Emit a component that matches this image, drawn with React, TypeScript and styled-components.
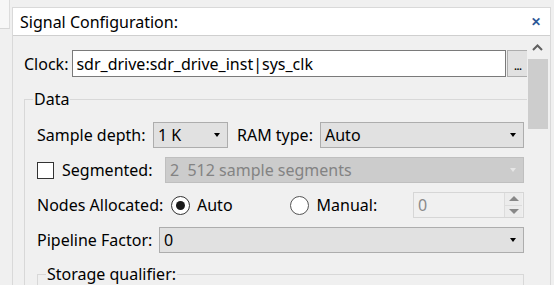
import React from "react";
import styled, { createGlobalStyle } from "styled-components";

const Global = createGlobalStyle`
  html, body { margin: 0; padding: 0; background: #f0f0f0; }
  body { font-family: "Noto Sans", "Open Sans", sans-serif; font-size: 16px; color: #000; }
  * { box-sizing: border-box; }
`;

const Page = styled.div`
  width: 554px;
  height: 285px;
  display: flex;
  overflow: hidden;
  background: #f0f0f0;
`;

const LeftStub = styled.div`
  width: 12px;
  flex: none;
  display: flex;
  flex-direction: column;
`;

const StubTop = styled.div`
  height: 29px;
  width: 10px;
  border-right: 1px solid #dcdcdc;
  border-bottom: 1px solid #d6d6d6;
  background: #f7f7f7;
`;

const Panel = styled.div`
  flex: 1;
  margin: 7px 3px 0 0;
  border: 1px solid #d9d9d9;
  border-bottom: none;
  display: flex;
  flex-direction: column;
  min-width: 0;
`;

const TitleBar = styled.div`
  height: 28px;
  flex: none;
  background: #fff;
  border-bottom: 1px solid #cfcfcf;
  display: flex;
  align-items: center;
  justify-content: space-between;
  padding: 0 9px 0 7px;
`;

const Title = styled.span`
  line-height: 20px;
`;

const Close = styled.span`
  font-size: 12px;
  font-weight: bold;
  color: #2b5797;
  line-height: 12px;
`;

const Body = styled.div`
  flex: 1;
  display: flex;
  min-height: 0;
`;

const Content = styled.div`
  flex: 1;
  min-width: 0;
  overflow: hidden;
  padding: 14px 0 0 11px;
`;

const Row = styled.div<{ $mt?: number }>`
  display: flex;
  align-items: center;
  margin-top: ${(p) => p.$mt ?? 0}px;
`;

const Label = styled.span<{ $w?: number; $ml?: number }>`
  flex: none;
  width: ${(p) => (p.$w ? `${p.$w}px` : "auto")};
  margin-left: ${(p) => p.$ml ?? 0}px;
  line-height: 20px;
  white-space: nowrap;
`;

const TextInput = styled.div`
  flex: 1;
  height: 27px;
  margin-left: 4px;
  background: #fff;
  border: 1px solid #7a7a7a;
  display: flex;
  align-items: center;
  padding-left: 3px;
  white-space: nowrap;
`;

const DotsButton = styled.div`
  width: 20px;
  height: 27px;
  margin-left: 1px;
  flex: none;
  background: #e1e1e1;
  border: 1px solid #adadad;
  border-right: none;
  display: flex;
  align-items: flex-end;
  justify-content: center;
  padding-bottom: 6px;
  font-size: 13px;
  line-height: 10px;
  letter-spacing: -1px;
`;

const Group = styled.fieldset<{ $right?: boolean }>`
  width: 100%;
  margin: 0;
  padding: ${(p) => (p.$right ? "0 0 0 12px" : "13px 3px 0 12px")};
  border: 1px solid #d8d8d8;
  ${(p) => (p.$right ? "height: 40px;" : "border-right: none;")}
  border-bottom: none;
  min-width: 0;
`;

const Legend = styled.legend`
  padding: 0 1px;
  margin-left: -4px;
  line-height: 20px;
`;

const Rows = styled.div`
  display: flex;
  flex-direction: column;
  gap: 9px;
`;

const Combo = styled.div<{ $w?: number; $disabled?: boolean }>`
  ${(p) => (p.$w ? `width: ${p.$w}px; flex: none;` : "flex: 1;")}
  height: 26px;
  background: ${(p) => (p.$disabled ? "#cccccc" : "#e1e1e1")};
  border: 1px solid ${(p) => (p.$disabled ? "#bfbfbf" : "#adadad")};
  color: ${(p) => (p.$disabled ? "#838383" : "#000")};
  display: flex;
  align-items: center;
  justify-content: space-between;
  padding: 0 7px 0 4px;
  white-space: pre;
`;

const Arrow = styled.span<{ $disabled?: boolean }>`
  width: 0;
  height: 0;
  border-left: 3.5px solid transparent;
  border-right: 3.5px solid transparent;
  border-top: 4px solid ${(p) => (p.$disabled ? "#e6e6e6" : "#000")};
`;

const CheckBox = styled.span`
  width: 17px;
  height: 17px;
  flex: none;
  background: #fff;
  border: 1px solid #333;
  margin-right: 8px;
`;

const Radio = styled.span<{ $checked?: boolean; $ml?: number }>`
  width: 19px;
  height: 19px;
  flex: none;
  margin-left: ${(p) => p.$ml ?? 0}px;
  border-radius: 50%;
  background: #fff;
  border: 1px solid ${(p) => (p.$checked ? "#333" : "#555")};
  display: flex;
  align-items: center;
  justify-content: center;
  &::after {
    content: "";
    display: ${(p) => (p.$checked ? "block" : "none")};
    width: 9px;
    height: 9px;
    border-radius: 50%;
    background: #1a1a1a;
  }
`;

const Spin = styled.div`
  width: 111px;
  height: 26px;
  flex: none;
  margin-left: auto;
  border: 1px solid #d6d6d6;
  background: #f0f0f0;
  display: flex;
  align-items: center;
  padding-left: 4px;
  color: #8a8a8a;
`;

const SpinButtons = styled.div`
  margin-left: auto;
  width: 18px;
  height: 24px;
  display: flex;
  flex-direction: column;
  border-left: 1px solid #dcdcdc;
  margin-right: 1px;
`;

const SpinHalf = styled.div<{ $down?: boolean }>`
  flex: 1;
  display: flex;
  align-items: center;
  justify-content: center;
  background: #ececec;
  ${(p) => (p.$down ? "border-top: 1px solid #dcdcdc;" : "")}
  &::after {
    content: "";
    width: 0;
    height: 0;
    border-left: 5px solid transparent;
    border-right: 5px solid transparent;
    ${(p) => (p.$down ? "border-top: 5px solid #888;" : "border-bottom: 5px solid #888;")}
  }
`;

const ScrollBar = styled.div`
  width: 21px;
  flex: none;
  margin-right: 2px;
  background: #f0f0f0;
  display: flex;
  flex-direction: column;
  align-items: center;
`;

const ScrollUp = styled.div`
  height: 23px;
  width: 100%;
  display: flex;
  align-items: center;
  justify-content: center;
`;

const Thumb = styled.div`
  width: 20px;
  height: 70px;
  background: #cdcdcd;
`;

export default function App() {
  return (
    <>
      <Global />
      <Page>
        <LeftStub>
          <StubTop />
        </LeftStub>
        <Panel>
          <TitleBar>
            <Title>Signal Configuration:</Title>
            <Close>✕</Close>
          </TitleBar>
          <Body>
            <Content>
              <Row>
                <Label>Clock:</Label>
                <TextInput>sdr_drive:sdr_drive_inst|sys_clk</TextInput>
                <DotsButton>...</DotsButton>
              </Row>
              <Row $mt={12}>
                <Group>
                  <Legend>Data</Legend>
                  <Rows>
                    <Row>
                      <Label $w={116}>Sample depth:</Label>
                      <Combo $w={75}>
                        1 K<Arrow />
                      </Combo>
                      <Label $w={83} $ml={9}>
                        RAM type:
                      </Label>
                      <Combo>
                        Auto<Arrow />
                      </Combo>
                    </Row>
                    <Row>
                      <CheckBox />
                      <Label $w={103}>Segmented:</Label>
                      <Combo $disabled>
                        {"2  512 sample segments"}
                        <Arrow $disabled />
                      </Combo>
                    </Row>
                    <Row>
                      <Label $w={134}>Nodes Allocated:</Label>
                      <Radio $checked />
                      <Label $ml={7}>Auto</Label>
                      <Radio $ml={57} />
                      <Label $ml={8}>Manual:</Label>
                      <Spin>
                        0
                        <SpinButtons>
                          <SpinHalf />
                          <SpinHalf $down />
                        </SpinButtons>
                      </Spin>
                    </Row>
                    <Row>
                      <Label $w={122}>Pipeline Factor:</Label>
                      <Combo>
                        0<Arrow />
                      </Combo>
                    </Row>
                    <Row $mt={2}>
                      <Group $right>
                        <Legend>Storage qualifier:</Legend>
                      </Group>
                    </Row>
                  </Rows>
                </Group>
              </Row>
            </Content>
            <ScrollBar>
              <ScrollUp>
                <svg width="11" height="7" viewBox="0 0 11 7">
                  <path d="M1 6 L5.5 1.5 L10 6" fill="none" stroke="#606060" strokeWidth="2" />
                </svg>
              </ScrollUp>
              <Thumb />
            </ScrollBar>
          </Body>
        </Panel>
      </Page>
    </>
  );
}
